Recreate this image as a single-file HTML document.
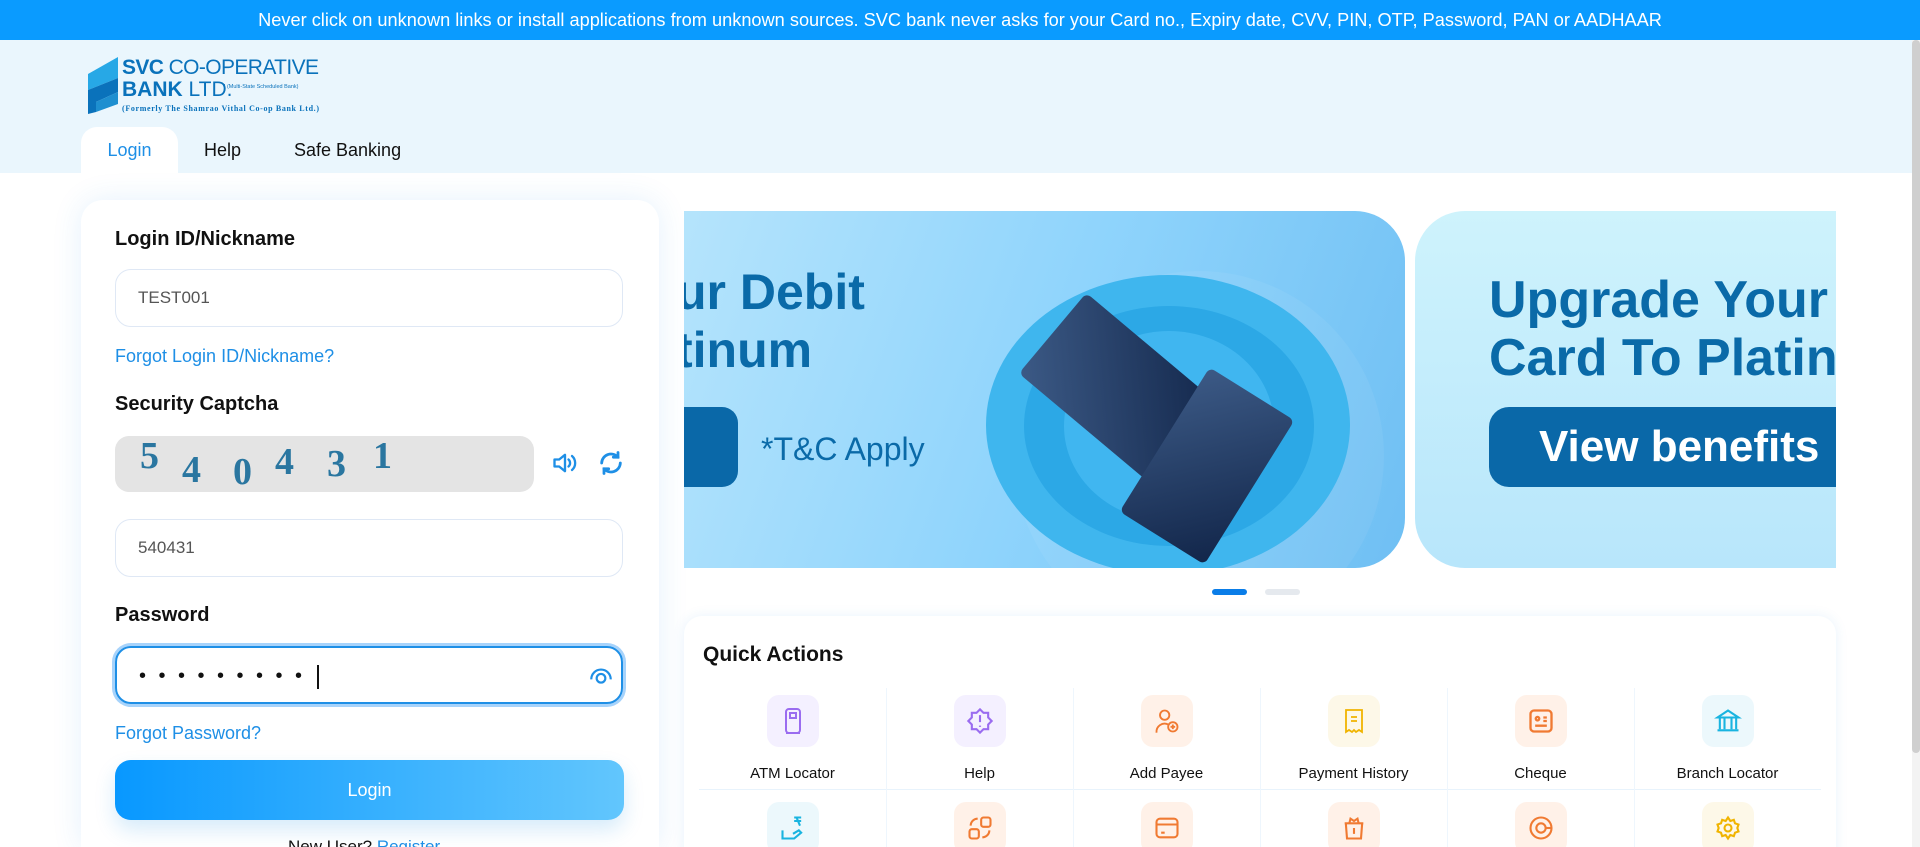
<!DOCTYPE html>
<html><head><meta charset="utf-8">
<style>
*{box-sizing:border-box;margin:0;padding:0}
html,body{width:1920px;height:847px;overflow:hidden}
body{background:#fff;font-family:"Liberation Sans",sans-serif;color:#111;position:relative}
.top{position:absolute;left:0;top:0;width:1920px;height:40px;background:#0a9bff;color:#fff;font-size:18.2px;text-align:center;line-height:40px;white-space:nowrap}
.hdr{position:absolute;left:0;top:40px;width:1912px;height:133px;background:#eaf6fd}
.logo{position:absolute;left:88px;top:54px}
.tab{position:absolute;top:127px;height:46px;line-height:46px;font-size:18px;color:#111}
.tab.act{left:81px;width:97px;background:#fff;border-radius:16px 16px 0 0;text-align:center;color:#1e8fe6}
.card{position:absolute;left:81px;top:200px;width:578px;height:647px;background:#fff;border-radius:22px 22px 0 0;box-shadow:0 0 30px rgba(40,140,230,.12)}
.lbl{position:absolute;left:115px;font-size:20px;font-weight:bold;color:#111}
.inp{position:absolute;left:115px;width:508px;height:58px;border:1px solid #dfe8f5;border-radius:16px;font-size:17px;color:#555;padding-left:22px;line-height:56px}
.lnk{position:absolute;left:115px;font-size:18px;color:#1e8fe6}
.scroll{position:absolute;right:0;top:40px;width:8px;height:807px;background:#f3f3f3}
.scroll div{width:8px;height:713px;background:#cfcfcf;border-radius:4px}
.qa{position:absolute;left:684px;top:616px;width:1152px;height:260px;background:#fff;border-radius:18px;box-shadow:0 0 12px rgba(40,140,230,.10)}
.cell{position:absolute;width:187px;text-align:center;font-size:15px;color:#111}
.ic{width:52px;height:52px;border-radius:12px;margin:0 auto 18px;display:flex;align-items:center;justify-content:center}
</style></head><body>
<div class="top">Never click on unknown links or install applications from unknown sources. SVC bank never asks for your Card no., Expiry date, CVV, PIN, OTP, Password, PAN or AADHAAR</div>
<div class="hdr"></div>
<div class="logo">
<svg width="250" height="62" viewBox="0 0 250 62">
<polygon points="30,3 30,24 0,36 0,20" fill="#27a8e6"/>
<polygon points="0,36 30,24 30,38 8,48 8,58 0,60" fill="#0a72bb"/>
<polygon points="8,48 30,38 30,50 8,58" fill="#1e8fd0"/>
<text x="34" y="20" font-family="Liberation Sans" font-size="21" fill="#0a72bb" textLength="197"><tspan font-weight="bold">SVC</tspan> CO-OPERATIVE</text>
<text x="34" y="42" font-family="Liberation Sans" font-size="21" fill="#0a72bb"><tspan font-weight="bold">BANK</tspan> LTD.</text>
<text x="136" y="34" font-family="Liberation Sans" font-size="5.5" fill="#0a72bb">| (Multi-State Scheduled Bank)</text>
<text x="34" y="57" font-family="Liberation Serif" font-size="8" font-weight="bold" fill="#0a72bb" textLength="197">(Formerly The Shamrao Vithal Co-op Bank Ltd.)</text>
</svg></div>
<div class="tab act">Login</div>
<div class="tab" style="left:204px">Help</div>
<div class="tab" style="left:294px">Safe Banking</div>

<div class="card"></div>
<div class="lbl" style="top:228px">Login ID/Nickname</div>
<div class="inp" style="top:269px">TEST001</div>
<div class="lnk" style="top:346px">Forgot Login ID/Nickname?</div>
<div class="lbl" style="top:393px">Security Captcha</div>
<div style="position:absolute;left:115px;top:436px;width:419px;height:56px;background:#e4e4e4;border-radius:14px;font-family:'Liberation Serif',serif;font-size:38px;color:#2a76a0;font-weight:bold">
<span style="position:absolute;left:25px;top:-2px">5</span><span style="position:absolute;left:67px;top:12px">4</span><span style="position:absolute;left:118px;top:14px">0</span><span style="position:absolute;left:160px;top:4px">4</span><span style="position:absolute;left:212px;top:6px">3</span><span style="position:absolute;left:258px;top:-2px">1</span></div>
<svg style="position:absolute;left:551px;top:449px" width="28" height="28" viewBox="0 0 24 24" fill="none" stroke="#1e8fe6" stroke-width="2" stroke-linejoin="round" stroke-linecap="round"><path d="M3 9h4l5-4v14l-5-4H3z"/><path d="M15 9a4 4 0 0 1 0 6M18 6a8 8 0 0 1 0 12"/></svg>
<svg style="position:absolute;left:597px;top:449px" width="28" height="28" viewBox="0 0 24 24" fill="none" stroke="#1e8fe6" stroke-width="2.4" stroke-linecap="round"><path d="M20 12a8 8 0 0 1-14 5M4 12a8 8 0 0 1 14-5"/><path d="M18 3v4h-4M6 21v-4h4"/></svg>
<div class="inp" style="top:519px">540431</div>
<div class="lbl" style="top:604px">Password</div>
<div class="inp" style="top:646px;border:2px solid #1e8fe6;box-shadow:0 0 0 3px #a7d3fb;color:#111;font-size:20px;letter-spacing:12.5px">•••••••••<span style="display:inline-block;width:2px;height:24px;background:#111;vertical-align:middle;margin-left:2px"></span></div>
<svg style="position:absolute;left:588px;top:662px" width="26" height="26" viewBox="0 0 24 24" fill="none" stroke="#1e8fe6" stroke-width="2"><path d="M3 16a9 9 0 0 1 18 0"/><circle cx="12" cy="15" r="4"/></svg>
<div class="lnk" style="top:723px">Forgot Password?</div>
<div style="position:absolute;left:115px;top:760px;width:509px;height:60px;border-radius:16px;background:linear-gradient(90deg,#0898ff,#62c6fd);color:#fff;font-size:18px;text-align:center;line-height:60px;box-shadow:0 10px 20px rgba(30,143,230,.18)">Login</div>
<div style="position:absolute;left:288px;top:837px;font-size:17px">New User? <span style="color:#1e8fe6">Register</span></div>

<div style="position:absolute;left:684px;top:211px;width:721px;height:357px;border-radius:0 50px 50px 0;overflow:hidden;background:linear-gradient(110deg,#b5e4fc,#8fd4fc 50%,#6fbff3)">
<div style="position:absolute;left:330px;top:60px;width:370px;height:370px;border-radius:50%;background:rgba(255,255,255,.06)"></div>
<div style="position:absolute;left:302px;top:64px;width:364px;height:300px;border-radius:50%;background:#3fb6ee"></div>
<div style="position:absolute;left:340px;top:95px;width:290px;height:240px;border-radius:50%;background:#2ca8e6"></div>
<div style="position:absolute;left:380px;top:120px;width:210px;height:190px;border-radius:50%;background:#40b6f0"></div>
<div style="position:absolute;left:385px;top:90px;width:105px;height:180px;background:linear-gradient(135deg,#3c5a86,#12264a);transform:rotate(-50deg);border-radius:6px"></div>
<div style="position:absolute;left:473px;top:170px;width:100px;height:170px;background:linear-gradient(135deg,#3c5a86,#12264a);transform:rotate(32deg);border-radius:6px"></div>
<div style="position:absolute;left:-8px;top:52px;font-size:50px;font-weight:bold;color:#0a6aa8;line-height:58px">ur Debit<br>tinum</div>
<div style="position:absolute;left:-30px;top:196px;width:84px;height:80px;background:#0a68a8;border-radius:16px"></div>
<div style="position:absolute;left:77px;top:220px;font-size:32px;color:#0a6aa8">*T&amp;C Apply</div>
</div>
<div style="position:absolute;left:1415px;top:211px;width:421px;height:357px;border-radius:50px 0 0 50px;overflow:hidden;background:linear-gradient(180deg,#cef3fc,#b8e6fb)">
<div style="position:absolute;left:74px;top:60px;font-size:52px;font-weight:bold;color:#0a6aa8;line-height:58px;white-space:nowrap">Upgrade Your<br>Card To Platinum</div>
<div style="position:absolute;left:74px;top:196px;width:400px;height:80px;background:#0a68a8;border-radius:20px;color:#fff;font-size:44px;font-weight:bold;line-height:80px;padding-left:50px;white-space:nowrap">View benefits</div>
</div>
<div style="position:absolute;left:1212px;top:589px;width:35px;height:6px;border-radius:3px;background:#0a7de8"></div>
<div style="position:absolute;left:1265px;top:589px;width:35px;height:6px;border-radius:3px;background:#e5e9ee"></div>

<div class="qa"></div>
<div style="position:absolute;left:703px;top:643px;font-size:21px;font-weight:bold;color:#111">Quick Actions</div>
<div style="position:absolute;left:699px;top:789px;width:1122px;height:1px;background:#e8f3fc"></div>
<div style="position:absolute;left:886px;top:688px;width:1px;height:160px;background:#eef6fd"></div>
<div style="position:absolute;left:1073px;top:688px;width:1px;height:160px;background:#eef6fd"></div>
<div style="position:absolute;left:1260px;top:688px;width:1px;height:160px;background:#eef6fd"></div>
<div style="position:absolute;left:1447px;top:688px;width:1px;height:160px;background:#eef6fd"></div>
<div style="position:absolute;left:1634px;top:688px;width:1px;height:160px;background:#eef6fd"></div>

<div class="cell" style="left:699px;top:695px"><div class="ic" style="background:#f4f0ff"><svg width="24" height="28" viewBox="0 0 24 28" fill="none" stroke="#9a6cf0" stroke-width="2"><rect x="5" y="2" width="14" height="24" rx="3"/><rect x="9" y="6" width="6" height="5"/><path d="M5 26h14"/></svg></div>ATM Locator</div>
<div class="cell" style="left:886px;top:695px"><div class="ic" style="background:#f4f0ff"><svg width="28" height="28" viewBox="0 0 24 24" fill="none" stroke="#9a6cf0" stroke-width="1.8"><path d="M12 2l3 3h4v4l3 3-3 3v4h-4l-3 3-3-3H5v-4l-3-3 3-3V5h4z"/><path d="M12 7v6M12 16v1"/></svg></div>Help</div>
<div class="cell" style="left:1073px;top:695px"><div class="ic" style="background:#fff1e8"><svg width="28" height="28" viewBox="0 0 24 24" fill="none" stroke="#f07a32" stroke-width="1.6"><circle cx="10" cy="7" r="4"/><path d="M3 22a7 7 0 0 1 10-7"/><circle cx="17" cy="17" r="4"/><path d="M17 15v4M15 17h4"/></svg></div>Add Payee</div>
<div class="cell" style="left:1260px;top:695px"><div class="ic" style="background:#fdf8e8"><svg width="24" height="28" viewBox="0 0 24 28" fill="none" stroke="#f0b400" stroke-width="1.8"><path d="M4 3h16v22l-3-2-3 2-2-2-2 2-3-2-3 2z"/><path d="M9 10h6M9 14h6"/></svg></div>Payment History</div>
<div class="cell" style="left:1447px;top:695px"><div class="ic" style="background:#fff1e8"><svg width="28" height="28" viewBox="0 0 24 24" fill="none" stroke="#f07a32" stroke-width="2"><rect x="3" y="3" width="18" height="18" rx="3"/><circle cx="9" cy="10" r="1.5"/><path d="M14 9h3M14 12h3M7 16h10"/></svg></div>Cheque</div>
<div class="cell" style="left:1634px;top:695px"><div class="ic" style="background:#ecf8fc"><svg width="28" height="28" viewBox="0 0 24 24" fill="none" stroke="#19b4e0" stroke-width="1.8"><path d="M3 9l9-6 9 6zM5 9v10M9 9v10M15 9v10M19 9v10M3 20h18"/></svg></div>Branch Locator</div>

<div class="cell" style="left:699px;top:802px"><div class="ic" style="background:#ecf8fc"><svg width="28" height="28" viewBox="0 0 24 24" fill="none" stroke="#19b4e0" stroke-width="1.8"><path d="M3 14v7h10l6-5-2-2-5 3M13 3h6M13 6h6M15 3l3 7"/></svg></div></div>
<div class="cell" style="left:886px;top:802px"><div class="ic" style="background:#fff1e8"><svg width="28" height="28" viewBox="0 0 24 24" fill="none" stroke="#f07a32" stroke-width="1.8"><rect x="13" y="3" width="8" height="8" rx="2"/><rect x="3" y="13" width="8" height="8" rx="2"/><path d="M4 10a6 6 0 0 1 6-6M20 14a6 6 0 0 1-6 6"/></svg></div></div>
<div class="cell" style="left:1073px;top:802px"><div class="ic" style="background:#fff1e8"><svg width="28" height="28" viewBox="0 0 24 24" fill="none" stroke="#f07a32" stroke-width="1.8"><rect x="3" y="4" width="18" height="16" rx="3"/><path d="M3 9h18M7 16h3"/></svg></div></div>
<div class="cell" style="left:1260px;top:802px"><div class="ic" style="background:#fff1e8"><svg width="28" height="28" viewBox="0 0 24 24" fill="none" stroke="#f07a32" stroke-width="1.8"><path d="M5 8h14l-1 13H6zM4 8h16M8 8l1-4 3 2 3-2 1 4M12 12v5"/></svg></div></div>
<div class="cell" style="left:1447px;top:802px"><div class="ic" style="background:#fff1e8"><svg width="28" height="28" viewBox="0 0 24 24" fill="none" stroke="#f07a32" stroke-width="1.8"><circle cx="12" cy="12" r="9"/><circle cx="12" cy="12" r="4"/><path d="M16 12h5"/></svg></div></div>
<div class="cell" style="left:1634px;top:802px"><div class="ic" style="background:#fdf8e8"><svg width="28" height="28" viewBox="0 0 24 24" fill="none" stroke="#f0b400" stroke-width="1.8"><circle cx="12" cy="12" r="3"/><path d="M12 3l2 3 3-1 1 3 3 1-1 3 1 3-3 1-1 3-3-1-2 3-2-3-3 1-1-3-3-1 1-3-1-3 3-1 1-3 3 1z"/></svg></div></div>

<div class="scroll"><div></div></div>
</body></html>
